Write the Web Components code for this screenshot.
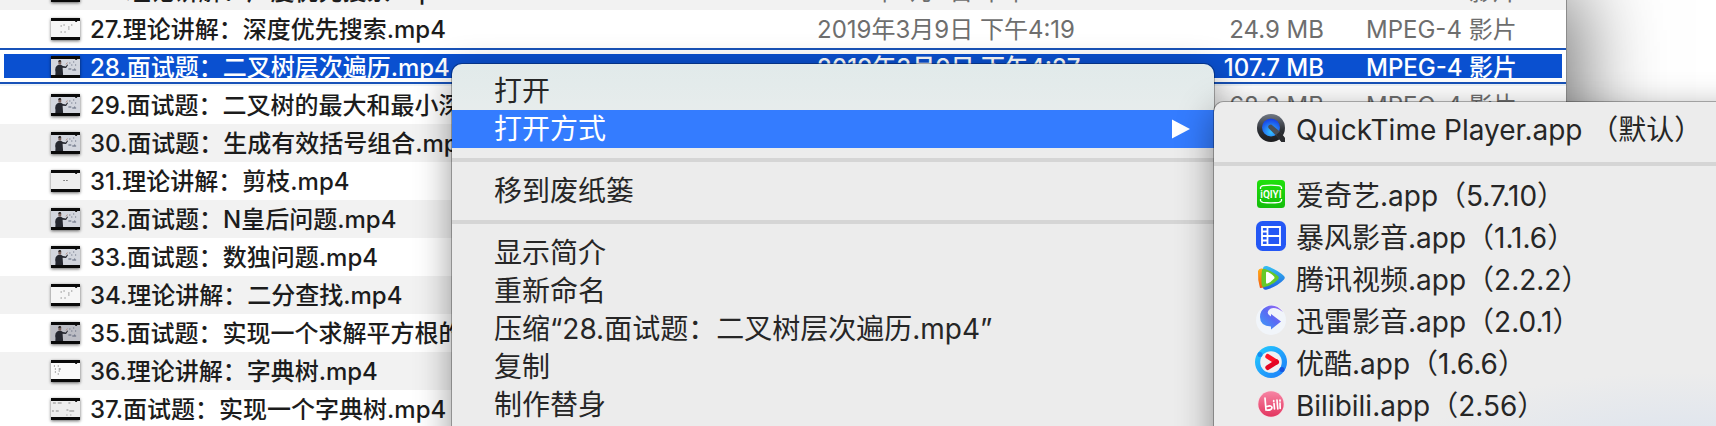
<!DOCTYPE html>
<html lang="zh-CN">
<head>
<meta charset="utf-8">
<title>Finder</title>
<style>
  html, body { margin: 0; height: 100%; overflow: hidden; background: #fff; }
  body { font-family: Inter, "Noto Sans CJK SC", sans-serif; color: #1c1c1c; }
</style>
</head>
<body>
<finder-desktop>
  <finder-window><file-list></file-list></finder-window>
  <context-menu slot="menu" class="main" label="文件菜单">
    <menu-entry>打开</menu-entry>
    <menu-entry active submenu>打开方式</menu-entry>
    <menu-divider></menu-divider>
    <menu-entry>移到废纸篓</menu-entry>
    <menu-divider></menu-divider>
    <menu-entry>显示简介</menu-entry>
    <menu-entry>重新命名</menu-entry>
    <menu-entry>压缩“28.面试题：二叉树层次遍历.mp4”</menu-entry>
    <menu-entry>复制</menu-entry>
    <menu-entry>制作替身</menu-entry>
  </context-menu>
  <context-menu slot="submenu" class="apps" label="打开方式">
    <menu-entry app><app-icon slot="icon" name="quicktime"></app-icon>QuickTime Player.app （默认）</menu-entry>
    <menu-divider></menu-divider>
    <menu-entry app><app-icon slot="icon" name="iqiyi"></app-icon>爱奇艺.app（5.7.10）</menu-entry>
    <menu-entry app><app-icon slot="icon" name="baofeng"></app-icon>暴风影音.app（1.1.6）</menu-entry>
    <menu-entry app><app-icon slot="icon" name="tencent"></app-icon>腾讯视频.app（2.2.2）</menu-entry>
    <menu-entry app><app-icon slot="icon" name="xunlei"></app-icon>迅雷影音.app（2.0.1）</menu-entry>
    <menu-entry app><app-icon slot="icon" name="youku"></app-icon>优酷.app（1.6.6）</menu-entry>
    <menu-entry app><app-icon slot="icon" name="bilibili"></app-icon>Bilibili.app（2.56）</menu-entry>
  </context-menu>
</finder-desktop>

<script>
function define(name, render) {
  customElements.define(name, class extends HTMLElement {
    connectedCallback() {
      if (this.shadowRoot) return;
      this.attachShadow({ mode: 'open' }).innerHTML = render(this);
    }
  });
}

define('finder-desktop', () => `
  <style>
    :host { display: block; position: relative; height: 100vh; overflow: hidden; background: #fff; }
    ::slotted(context-menu) { position: absolute; }
    ::slotted(.main) { left: 452px; top: 64px; width: 762px; --tint: linear-gradient(#e1eaea, #e6ecec 40px, #ececec 88px); }
    ::slotted(.apps) { left: 1214px; top: 102px; width: 560px; --tint: radial-gradient(ellipse 280px 90px at 470px 360px, #dae2ee, #ececec); }
  </style>
  <slot></slot><slot name="menu"></slot><slot name="submenu"></slot>`);

define('finder-window', () => `
  <style>
    :host { display: block; height: 100%; margin-right: 150px; background: #fff;
      box-shadow: 0 0 0 1px #8b8b8b, 0 0 80px 10px rgba(0,0,0,.6); overflow: hidden; }
  </style>
  <slot></slot>`);

const files = [
  [26, '理论讲解：广度优先搜索', 'board', '2019年3月9日 下午4:19', '41.3 MB'],
  [27, '理论讲解：深度优先搜索', 'board', '2019年3月9日 下午4:19', '24.9 MB'],
  [28, '面试题：二叉树层次遍历', 'person', '2019年3月9日 下午4:27', '107.7 MB'],
  [29, '面试题：二叉树的最大和最小深度', 'person', '', '68.2 MB'],
  [30, '面试题：生成有效括号组合', 'person'],
  [31, '理论讲解：剪枝', 'blank'],
  [32, '面试题：N皇后问题', 'person'],
  [33, '面试题：数独问题', 'person'],
  [34, '理论讲解：二分查找', 'board'],
  [35, '面试题：实现一个求解平方根的函数', 'dark'],
  [36, '理论讲解：字典树', 'tree'],
  [37, '面试题：实现一个字典树', 'lines']
];

define('file-list', () => `
  <style>
    :host { display: block; margin-top: -28px; }
    table { width: 100%; table-layout: fixed; border-collapse: collapse; font-size: 24px; line-height: 36px; }
    col.date { width: 300px; } col.size { width: 207px; } col.type { width: 242px; }
    tr { height: 38px; background: #fff; }
    tr:nth-child(odd) { background: #f2f2f2; }
    td { padding: 2px 0 0; color: #6e6e6e; white-space: nowrap; }
    td.name { color: #1c1c1c; font-weight: 500; }
    .file { display: flex; align-items: center; gap: 10px; padding-left: 51px; height: 36px; }
    video-thumb { margin-bottom: 2px; }
    td.size { text-align: right; }
    td.type { padding-left: 42px; }
    tr.selected { position: relative; background: #0a50d0; }
    tr.selected td { color: #fff; font-weight: 500; }
    tr.selected td.name::after { content: ""; position: absolute; inset: 0 0 2px; border: solid #1852b8; border-width: 2px 0; box-shadow: inset 0 0 0 4px #fff, 0 2px #edf3f7; }
  </style>
  <table aria-label="文件">
    <colgroup><col><col class="date"><col class="size"><col class="type"></colgroup>
    <tbody>${files.map(([n, title, kind, date = '', size = '']) => `
      <tr${n === 28 ? ' class="selected" aria-selected="true"' : ''}>
        <td class="name"><div class="file"><video-thumb kind="${kind}"></video-thumb><span>${n}.${title}.mp4</span></div></td>
        <td>${date}</td><td class="size">${size}</td><td class="type">${size ? 'MPEG-4 影片' : ''}</td>
      </tr>`).join('')}
    </tbody>
  </table>`);

const person = `<path d="M4.500 19q.5-3-.2-5 0-3.500 2-4.500l2-.7h2l2 1.200 3 .5 1.500-2 .8.6-2 3-3.600-.3.500 7.200z" fill="#25272f"/>
  <path d="M7.800 8.500q-.8-4 1.200-4.500 2.200 0 1.500 4.500z" fill="#7b625d"/><path d="M7.500 6q0-2 1.600-2 1.700 0 1.500 1.500z" fill="#222"/>
  <path d="M15.500 8.500l1.500-2" stroke="#b18f84" stroke-width="1"/>
  <path d="M19 7h1m3-1h1m-3 3h1m3 0h1m-8 4h3m1 1h4m-2-1h1" stroke="#596074" stroke-width="1"/>`;
const scenes = {
  board: `<rect y="3" width="30" height="16" fill="#f6f6f6"/><path d="M10 8h1m2-1h1m7 0h1m-4 2h1m-9 5h1m3 0h1m3-3h1" stroke="#555" stroke-width="1"/>`,
  blank: `<rect y="3" width="30" height="16" fill="#eee"/><path d="M13 10.500h1m2 0h1" stroke="#222" stroke-width="1"/>`,
  person: `<rect y="3" width="30" height="16" fill="#d3d6de"/>${person}`,
  dark: `<rect y="3" width="30" height="16" fill="#bcbdc4"/>${person}`,
  tree: `<rect y="3" width="30" height="16" fill="#fafafa"/><path d="M3 6h1m3 0h1m-4 3h1m3 0h2m-6 3h1m3-1h1m-2 3h1" stroke="#555" stroke-width="1"/>`,
  lines: `<rect y="3" width="30" height="16" fill="#eee"/><path d="M2 5h3m2 0h4m7 0h2M1 13h2m2 0h3m8-1h2m1 1h5m-8 4h1m3 0h1" stroke="#888" stroke-width="1"/>`
};
define('video-thumb', el => `
  <style>
    :host { display: block; flex: none; width: 29px; height: 22px; box-shadow: 0 1px 3px rgba(0,0,0,.6); }
    svg { display: block; width: 100%; }
  </style>
  <svg width="29" height="22" viewBox="0 0 30 22" preserveAspectRatio="none" aria-hidden="true">
    <rect width="30" height="22" fill="#0a0a0a"/>${scenes[el.getAttribute('kind')]}
    <path d="M25 3.500h2" stroke="#222"/>
  </svg>`);

define('context-menu', el => `
  <style>
    :host { display: block; box-sizing: border-box; min-height: 420px; padding-top: 8px; border-radius: 10px;
      background: var(--tint, #ececec); font-size: 28px; color: #262626;
      box-shadow: 0 0 0 1px rgba(0,0,0,.28), 0 10px 36px rgba(0,0,0,.42); }
  </style>
  <div role="menu" aria-label="${el.getAttribute('label')}"><slot></slot></div>`);

define('menu-entry', () => `
  <style>
    :host { display: block; height: 38px; }
    :host([app]) { height: 42px; }
    button { display: flex; align-items: center; width: 100%; height: 100%; margin: 0; border: 0; padding: 0 24px 0 42px;
      background: none; font: inherit; line-height: 38px; color: inherit; text-align: left; white-space: nowrap; }
    :host([app]) button { padding: 0 24px 2px 41px; }
    span { flex: 1; }
    svg { display: none; }
    :host([active]) button { background: #347cff; color: #fff; }
    :host([submenu]) svg { display: block; }
    ::slotted(app-icon) { margin: 0 9px 4px 0; }
  </style>
  <button type="button" role="menuitem"><slot name="icon"></slot><span><slot></slot></span>
    <svg width="18" height="20" viewBox="0 0 18 20" aria-hidden="true"><path d="M0 0.500L18 10L0 19.500z" fill="#fff"/></svg></button>`);

define('menu-divider', () => `
  <style>:host { display: block; height: 4px; margin: 10px 0; background: #d5d5d5; }</style>`);

const icons = {
  quicktime: `<defs><linearGradient id="a" x2="0" y2="1"><stop stop-color="#717884"/><stop offset=".6" stop-color="#2b2e33"/><stop offset="1" stop-color="#1c1c1e"/></linearGradient>
    <radialGradient id="b" cy=".75" r=".7"><stop stop-color="#35c1ff"/><stop offset="1" stop-color="#1743e8"/></radialGradient></defs>
    <circle cx="16" cy="16" r="14" fill="url(#a)"/><circle cx="16" cy="15.500" r="9" fill="url(#b)"/>
    <path d="M13.500 16a2.400 2.400 0 0 1 4-2.600L26 20.500l3.500 5.500.5 3.500-3.500.5-4-5z" fill="#4a4f57"/><path d="M21 23l4-3.500L30 26v4h-3.500z" fill="#2a2b2e"/>`,
  iqiyi: `<defs><linearGradient id="a" x2="0" y2="1"><stop stop-color="#1fe00c"/><stop offset="1" stop-color="#14bd0b"/></linearGradient></defs>
    <rect x="2" y="2" width="28" height="28" rx="3.500" fill="url(#a)"/>
    <path d="M5.500 11V9.500Q6 8 8 7.700q8-1 16 0 2 .3 2.500 1.800V11M5.500 21v1.500q.5 1.500 2.500 1.800 8 1 16 0 2-.3 2.500-1.800V21" fill="none" stroke="#fff" stroke-width="1.300"/>
    <text x="16" y="20" text-anchor="middle" font-size="10" font-weight="600" font-family="Roboto, sans-serif" fill="#fff">iQIYI</text>`,
  baofeng: `<rect x="1" y="1" width="30" height="30" rx="6.500" fill="#2457f5"/>
    <path d="M7 7h18v18H7zM12.500 7v18M12.500 16H25M7 11.500h5M7 16h5M7 20.500h5" fill="none" stroke="#fff" stroke-width="1.800"/>`,
  tencent: `<defs><linearGradient id="a" x2="0" y2="1"><stop stop-color="#35c0f2"/><stop offset="1" stop-color="#1e5fe0"/></linearGradient>
    <linearGradient id="b" x2="0" y2="1"><stop stop-color="#ffae18"/><stop offset="1" stop-color="#f45a0c"/></linearGradient></defs>
    <path d="M8 6q.5-2.500 4-2Q23 8 29 14q1.600 1.800 0 3.500Q23 24 12 27.500 8 28.500 8 25z" fill="url(#a)"/>
    <path d="M3 9q.7-3 4-2.500 3 .5 5 1.500L10 25q-2.500 1-5 1-2.500-8-2-17z" fill="url(#b)"/>
    <path d="M7 8q0-1.500 3-1Q19 10 23 14q1.600 1.800 0 3.500Q18 23 9 25q-2 .3-2.300-2Q6 15 7 8z" fill="#65c92a"/><path d="M11 11q0-2 2-1 4 2 6 4.500 1 1.200 0 2.300-3 3-6 4.500-2 1-2-1z" fill="#fff"/>`,
  xunlei: `<defs><linearGradient id="a" x1="1" x2="0" y2="1"><stop stop-color="#a668ef"/><stop offset=".5" stop-color="#5a6bf4"/><stop offset="1" stop-color="#3aa1f7"/></linearGradient></defs>
    <circle cx="16" cy="16" r="15" fill="#f1f5fa"/>
    <path d="M5 13Q5 6 11 3q9-4.500 17 5-8-6-13-3-4 3-1 6l2 1.500V10l10 7.500-10 8v-3Q5 22 5 13z" fill="url(#a)"/>`,
  youku: `<defs><linearGradient id="a" x2="1" y2="1"><stop stop-color="#24d0ff"/><stop offset="1" stop-color="#1e78f8"/></linearGradient></defs>
    <circle cx="16" cy="16" r="16" fill="url(#a)"/><circle cx="16" cy="16" r="10.800" fill="#f0f1f3"/>
    <circle cx="5" cy="8.500" r="2.500" fill="#168bf0"/><circle cx="27" cy="23.500" r="2.500" fill="#1656df"/>
    <path d="M12.800 10.500L21.500 16" stroke="#ff1428" stroke-width="5" stroke-linecap="round"/><path d="M12.800 21.500L21.500 16" stroke="#e40624" stroke-width="5" stroke-linecap="round"/>`,
  bilibili: `<defs><linearGradient id="a" x2="0" y2="1"><stop stop-color="#f784a4"/><stop offset="1" stop-color="#e3365f"/></linearGradient></defs>
    <circle cx="16" cy="16" r="13.500" fill="#f5dfe5"/><circle cx="16" cy="16" r="12.700" fill="url(#a)"/>
    <path d="M10 10l1 12q6 .5 6-2.500-.5-2.500-5-1M19 15.500l.5 5.500M22 12l.8 9M25 15l.2 5.500M18.700 13.500v-1M25 13v-1" fill="none" stroke="#fff" stroke-width="1.700" stroke-linecap="round"/>`
};
define('app-icon', el => `
  <style>:host { display: block; flex: none; width: 32px; height: 32px; } svg { display: block; }</style>
  <svg width="32" height="32" viewBox="0 0 32 32" aria-hidden="true">${icons[el.getAttribute('name')]}</svg>`);
</script>
</body>
</html>
